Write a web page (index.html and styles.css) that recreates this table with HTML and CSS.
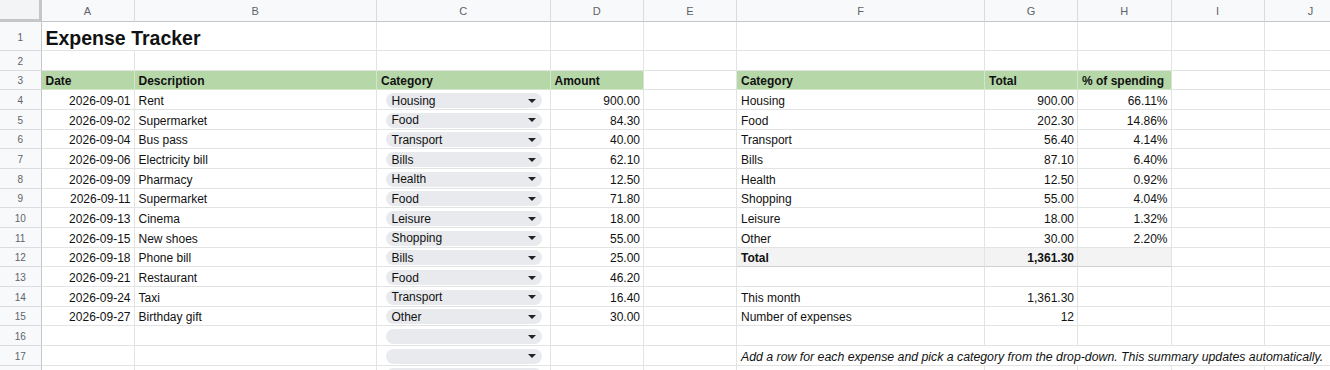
FILE: index.html
```html
<!DOCTYPE html>
<html lang="en">
<head>
<meta charset="utf-8">
<title>Expense Tracker</title>
<link rel="stylesheet" href="styles.css">
</head>
<body>
<div class="sheet">
  <!-- column headers -->
  <div class="corner"></div>
  <div class="ch">A</div><div class="ch">B</div><div class="ch">C</div><div class="ch">D</div><div class="ch">E</div>
  <div class="ch">F</div><div class="ch">G</div><div class="ch">H</div><div class="ch">I</div><div class="ch">J</div>

  <!-- row 1 -->
  <div class="rh">1</div>
  <div class="c title span2">Expense Tracker</div>
  <div class="c"></div><div class="c"></div><div class="c"></div><div class="c"></div><div class="c"></div><div class="c"></div><div class="c"></div><div class="c"></div>

  <!-- row 2 -->
  <div class="rh">2</div>
  <div class="c"></div><div class="c"></div><div class="c"></div><div class="c"></div><div class="c"></div><div class="c"></div><div class="c"></div><div class="c"></div><div class="c"></div><div class="c"></div>

  <!-- row 3 -->
  <div class="rh">3</div>
  <div class="c hd">Date</div><div class="c hd">Description</div><div class="c hd">Category</div><div class="c hd">Amount</div>
  <div class="c"></div>
  <div class="c hd">Category</div><div class="c hd">Total</div><div class="c hd">% of spending</div>
  <div class="c"></div><div class="c"></div>

  <!-- row 4 -->
  <div class="rh">4</div>
  <div class="c r">2026-09-01</div><div class="c">Rent</div>
  <div class="c dd"><span class="chip"><span class="lbl">Housing</span><span class="arr"></span></span></div>
  <div class="c r">900.00</div><div class="c"></div>
  <div class="c">Housing</div><div class="c r">900.00</div><div class="c r">66.11%</div><div class="c"></div><div class="c"></div>

  <!-- row 5 -->
  <div class="rh">5</div>
  <div class="c r">2026-09-02</div><div class="c">Supermarket</div>
  <div class="c dd"><span class="chip"><span class="lbl">Food</span><span class="arr"></span></span></div>
  <div class="c r">84.30</div><div class="c"></div>
  <div class="c">Food</div><div class="c r">202.30</div><div class="c r">14.86%</div><div class="c"></div><div class="c"></div>

  <!-- row 6 -->
  <div class="rh">6</div>
  <div class="c r">2026-09-04</div><div class="c">Bus pass</div>
  <div class="c dd"><span class="chip"><span class="lbl">Transport</span><span class="arr"></span></span></div>
  <div class="c r">40.00</div><div class="c"></div>
  <div class="c">Transport</div><div class="c r">56.40</div><div class="c r">4.14%</div><div class="c"></div><div class="c"></div>

  <!-- row 7 -->
  <div class="rh">7</div>
  <div class="c r">2026-09-06</div><div class="c">Electricity bill</div>
  <div class="c dd"><span class="chip"><span class="lbl">Bills</span><span class="arr"></span></span></div>
  <div class="c r">62.10</div><div class="c"></div>
  <div class="c">Bills</div><div class="c r">87.10</div><div class="c r">6.40%</div><div class="c"></div><div class="c"></div>

  <!-- row 8 -->
  <div class="rh">8</div>
  <div class="c r">2026-09-09</div><div class="c">Pharmacy</div>
  <div class="c dd"><span class="chip"><span class="lbl">Health</span><span class="arr"></span></span></div>
  <div class="c r">12.50</div><div class="c"></div>
  <div class="c">Health</div><div class="c r">12.50</div><div class="c r">0.92%</div><div class="c"></div><div class="c"></div>

  <!-- row 9 -->
  <div class="rh">9</div>
  <div class="c r">2026-09-11</div><div class="c">Supermarket</div>
  <div class="c dd"><span class="chip"><span class="lbl">Food</span><span class="arr"></span></span></div>
  <div class="c r">71.80</div><div class="c"></div>
  <div class="c">Shopping</div><div class="c r">55.00</div><div class="c r">4.04%</div><div class="c"></div><div class="c"></div>

  <!-- row 10 -->
  <div class="rh">10</div>
  <div class="c r">2026-09-13</div><div class="c">Cinema</div>
  <div class="c dd"><span class="chip"><span class="lbl">Leisure</span><span class="arr"></span></span></div>
  <div class="c r">18.00</div><div class="c"></div>
  <div class="c">Leisure</div><div class="c r">18.00</div><div class="c r">1.32%</div><div class="c"></div><div class="c"></div>

  <!-- row 11 -->
  <div class="rh">11</div>
  <div class="c r">2026-09-15</div><div class="c">New shoes</div>
  <div class="c dd"><span class="chip"><span class="lbl">Shopping</span><span class="arr"></span></span></div>
  <div class="c r">55.00</div><div class="c"></div>
  <div class="c">Other</div><div class="c r">30.00</div><div class="c r">2.20%</div><div class="c"></div><div class="c"></div>

  <!-- row 12 -->
  <div class="rh">12</div>
  <div class="c r">2026-09-18</div><div class="c">Phone bill</div>
  <div class="c dd"><span class="chip"><span class="lbl">Bills</span><span class="arr"></span></span></div>
  <div class="c r">25.00</div><div class="c"></div>
  <div class="c tot b">Total</div><div class="c tot r b">1,361.30</div><div class="c tot"></div><div class="c"></div><div class="c"></div>

  <!-- row 13 -->
  <div class="rh">13</div>
  <div class="c r">2026-09-21</div><div class="c">Restaurant</div>
  <div class="c dd"><span class="chip"><span class="lbl">Food</span><span class="arr"></span></span></div>
  <div class="c r">46.20</div><div class="c"></div>
  <div class="c"></div><div class="c"></div><div class="c"></div><div class="c"></div><div class="c"></div>

  <!-- row 14 -->
  <div class="rh">14</div>
  <div class="c r">2026-09-24</div><div class="c">Taxi</div>
  <div class="c dd"><span class="chip"><span class="lbl">Transport</span><span class="arr"></span></span></div>
  <div class="c r">16.40</div><div class="c"></div>
  <div class="c">This month</div><div class="c r">1,361.30</div><div class="c"></div><div class="c"></div><div class="c"></div>

  <!-- row 15 -->
  <div class="rh">15</div>
  <div class="c r">2026-09-27</div><div class="c">Birthday gift</div>
  <div class="c dd"><span class="chip"><span class="lbl">Other</span><span class="arr"></span></span></div>
  <div class="c r">30.00</div><div class="c"></div>
  <div class="c">Number of expenses</div><div class="c r">12</div><div class="c"></div><div class="c"></div><div class="c"></div>

  <!-- row 16 -->
  <div class="rh">16</div>
  <div class="c"></div><div class="c"></div>
  <div class="c dd"><span class="chip"><span class="lbl"></span><span class="arr"></span></span></div>
  <div class="c"></div><div class="c"></div>
  <div class="c"></div><div class="c"></div><div class="c"></div><div class="c"></div><div class="c"></div>

  <!-- row 17 -->
  <div class="rh">17</div>
  <div class="c"></div><div class="c"></div>
  <div class="c dd"><span class="chip"><span class="lbl"></span><span class="arr"></span></span></div>
  <div class="c"></div><div class="c"></div>
  <div class="c note span5">Add a row for each expense and pick a category from the drop-down. This summary updates automatically.</div>

  <!-- row 18 (partly visible at the bottom edge) -->
  <div class="rh"></div>
  <div class="c"></div><div class="c"></div>
  <div class="c dd"><span class="chip"><span class="lbl"></span><span class="arr"></span></span></div>
  <div class="c"></div><div class="c"></div>
  <div class="c"></div><div class="c"></div><div class="c"></div><div class="c"></div><div class="c"></div>
</div>
</body>
</html>
```
FILE: styles.css
```css
html, body {
  margin: 0;
  padding: 0;
  background: #ffffff;
  overflow: hidden;
}

.sheet {
  display: grid;
  grid-template-columns: 41.5px 93px 242.5px 173.5px 93.5px 93px 248px 93px 93.5px 93px 93px;
  grid-template-rows: 22px 29px repeat(17, 19.67px);
  width: max-content;
  font-family: "Liberation Sans", Arial, sans-serif;
  font-size: 12px;
  color: #111111;
}

.sheet > div {
  box-sizing: border-box;
  min-width: 0;
  overflow: hidden;
  white-space: nowrap;
}

.corner {
  background: #f3f4f5;
  border-right: 3px solid #c4c6c8;
  border-bottom: 3px solid #c4c6c8;
}

.ch {
  background: #f8f9fa;
  color: #5f6368;
  font-size: 11px;
  display: flex;
  align-items: center;
  justify-content: center;
  border-right: 1px solid #dadce0;
  border-bottom: 1px solid #c4c7c5;
}

.rh {
  background: #f8f9fa;
  color: #5f6368;
  font-size: 10px;
  display: flex;
  align-items: center;
  justify-content: center;
  padding-top: 2px;
  border-right: 1px solid #c4c7c5;
  border-bottom: 1px solid #dadce0;
}

.c {
  display: flex;
  align-items: flex-end;
  padding: 0 3px 1px 4px;
  border-right: 1px solid #e2e3e3;
  border-bottom: 1px solid #e2e3e3;
  line-height: 14px;
}

.r {
  justify-content: flex-end;
}

.b {
  font-weight: bold;
}

.title {
  font-size: 19.5px;
  font-weight: bold;
  line-height: 22px;
  padding-bottom: 1px;
}

.span2 {
  grid-column: span 2;
}

.span5 {
  grid-column: span 5;
}

.hd {
  background: #b6d7a8;
  font-weight: bold;
  border-right-color: #d3e6cb;
  border-bottom-color: #d3e6cb;
}

.tot {
  background: #f3f3f3;
  border-bottom: 1px solid #d0d0d0;
}

.note {
  font-style: italic;
  font-size: 12.3px;
  padding-left: 4px;
}

.dd {
  align-items: center;
  padding: 2px 8px 0 8.5px;
}

.chip {
  flex: 1;
  height: 15px;
  display: flex;
  align-items: center;
  justify-content: space-between;
  background: #e8eaed;
  border-radius: 8px;
  padding: 0 6px 0 6px;
  box-sizing: border-box;
}

.lbl {
  line-height: 14px;
}

.arr {
  width: 0;
  height: 0;
  border-left: 4px solid transparent;
  border-right: 4px solid transparent;
  border-top: 4.5px solid #222222;
}
```
